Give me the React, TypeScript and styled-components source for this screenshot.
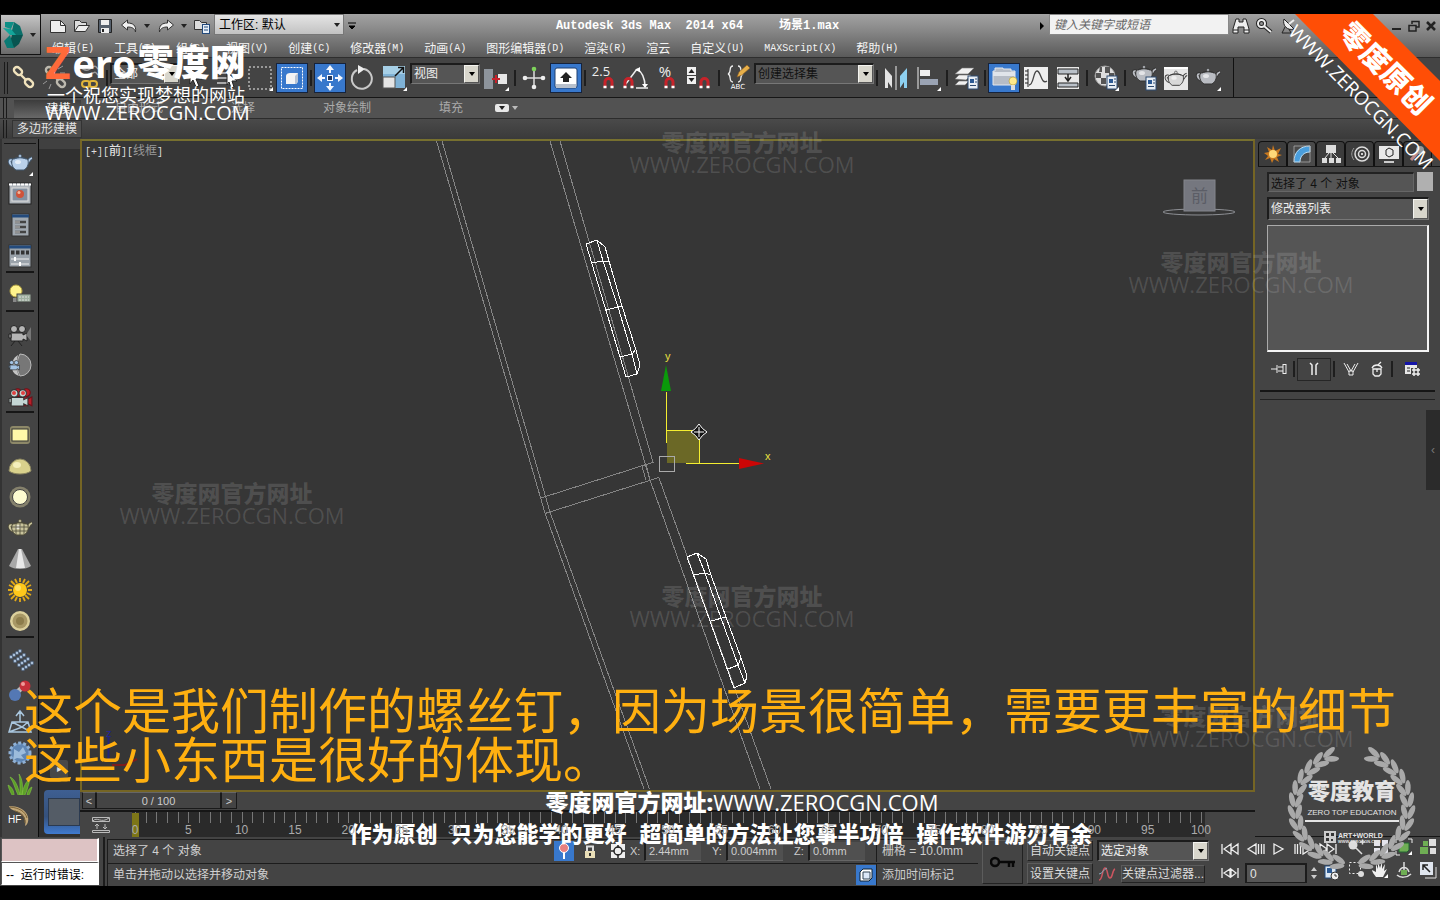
import React from "react";
import styled, { createGlobalStyle } from "styled-components";

const SANS = '"Liberation Sans", "Noto Sans CJK SC", sans-serif';
const MONO = '"Liberation Mono", "Noto Sans CJK SC", monospace';
const WIDE = '"Open Sans", "Noto Sans CJK SC", sans-serif';

const GlobalStyle = createGlobalStyle`
  * { box-sizing: border-box; }
  body { margin: 0; background: #000; font: 12px/16px ${SANS}; color: #e4e4e4; }
  button, input, select { font: inherit; color: inherit; margin: 0; padding: 0; border: 0; background: none; border-radius: 0; }
  svg { display: block; flex: none; }
`;

/* ---------- shell ---------- */

const Page = styled.div`
  position: relative;
  min-height: 100vh;
  padding: 14px 0;
  display: flex;
  flex-direction: column;
  background: #000;
  overflow: hidden;
`;

const Header = styled.header`
  display: flex;
  height: 44px;
  background: linear-gradient(#a2a2a2, #8a8a8a 35%, #5a5a5a);
  border-bottom: 1px solid #2e2e2e;
`;

const AppButton = styled.button`
  display: flex;
  align-items: center;
  justify-content: center;
  gap: 3px;
  width: 41px;
  height: 41px;
  border: 1px solid #111;
  background: linear-gradient(#c4c4c4, #6a6a6a);
`;

const HeaderRows = styled.div`
  flex: 1;
  display: flex;
  flex-direction: column;
`;

const TitleRow = styled.div`
  display: flex;
  align-items: center;
  height: 24px;
`;

const QuickTools = styled.div`
  display: flex;
  align-items: center;
  padding-left: 5px;
  width: 173px;
`;

const QuickButton = styled.button<{ $w?: number }>`
  display: flex;
  justify-content: center;
  width: ${(p) => p.$w ?? 24}px;
`;

const WorkspaceBox = styled.label`
  position: relative;
  display: flex;
  align-items: center;
  width: 130px;
  height: 21px;
  margin-bottom: 2px;
  background: linear-gradient(#e4e4e4, #c2c2c2);
  border: 1px solid #777;
  select { appearance: none; width: 100%; padding-left: 4px; color: #000; outline: 0; }
`;

const Caret = styled.span<{ $color?: string }>`
  width: 0;
  height: 0;
  margin: 0 3px;
  border: 3px solid transparent;
  border-top: 4px solid ${(p) => p.$color ?? "#222"};
  border-bottom: 0;
  pointer-events: none;
`;

const Title = styled.h1`
  flex: 1;
  margin: 0;
  padding-right: 4px;
  text-align: center;
  font: bold 12px/16px ${MONO};
  color: #fff;
  white-space: pre;
`;

const SearchInput = styled.input`
  width: 180px;
  height: 21px;
  margin: 0 0 2px 4px;
  padding-left: 4px;
  background: #f2f2f2;
  border: 1px solid #888;
  font-style: italic;
  color: #333;
  &::placeholder { color: #666; }
`;

const WindowButtons = styled.div`
  display: flex;
  margin-left: 87px;
  padding-right: 1px;
`;

const MenuRow = styled.nav`
  display: flex;
  align-items: center;
  gap: 20px;
  padding: 3px 0 0 11px;
  height: 20px;
`;

const MenuButton = styled.button`
  display: flex;
  align-items: center;
  color: #f4f4f4;
  white-space: nowrap;
`;

const Hotkey = styled.span`
  font: 10px/16px ${MONO};
`;

/* ---------- tool bar ---------- */

const ToolbarRow = styled.div`
  display: flex;
  height: 40px;
  background: #444;
  border-bottom: 1px solid #161616;
`;

const Toolbar = styled.div`
  display: flex;
  align-items: center;
  padding: 0 9px 0 4px;
  border-right: 1px solid #111;
`;

const Grip = styled.span<{ $h: number }>`
  width: 4px;
  height: ${(p) => p.$h}px;
  border: solid #1a1a1a;
  border-width: 0 1px;
`;

const ToolButton = styled.button<{ $on?: boolean }>`
  display: flex;
  align-items: center;
  justify-content: center;
  width: 32px;
  height: 30px;
  border: 1px solid ${(p) => (p.$on ? "#16233c" : "transparent")};
  background: ${(p) => (p.$on ? "#3878cc" : "none")};
`;

const ToolSeparator = styled.span`
  width: 2px;
  height: 16px;
  margin: 0 2px;
  background: #1e1e1e;
`;

const SelectBox = styled.label<{ $w?: number; $dark?: boolean; $h?: number; $raise?: boolean }>`
  display: flex;
  align-items: center;
  width: ${(p) => (p.$w ? p.$w + "px" : "auto")};
  height: ${(p) => p.$h ?? 21}px;
  margin-bottom: ${(p) => (p.$raise ? 9 : 0)}px;
  background: #555;
  border: 2px solid #1c1c1c;
  border-right: 1px solid #777;
  border-bottom: 1px solid #777;
  select {
    appearance: none;
    flex: 1;
    min-width: 0;
    padding-left: 2px;
    color: ${(p) => (p.$dark ? "#111" : "#eee")};
    outline: 0;
  }
`;

const ArrowBox = styled.span`
  display: flex;
  align-items: center;
  justify-content: center;
  width: 15px;
  align-self: stretch;
  background: #d8d6cc;
  border: 1px solid #f4f4f0;
  border-right-color: #555;
  border-bottom-color: #555;
  pointer-events: none;
`;

/* ---------- ribbon ---------- */

const RibbonTabs = styled.div`
  display: flex;
  align-items: center;
  height: 21px;
  padding-left: 3px;
  background: #525252;
  border-bottom: 1px solid #2c2c2c;
`;

const RibbonTab = styled.button<{ $on?: boolean }>`
  width: ${(p) => (p.$on ? 67 : 104)}px;
  height: 18px;
  margin: ${(p) => (p.$on ? "2px 6px 0 7px" : "0")};
  padding-left: ${(p) => (p.$on ? 22 : 0)}px;
  color: ${(p) => (p.$on ? "#eee" : "#aaa")};
  background: ${(p) => (p.$on ? "linear-gradient(#3c3c3c, #686868)" : "none")};
`;

const RibbonChip = styled.button`
  display: flex;
  align-items: center;
  justify-content: center;
  width: 14px;
  height: 8px;
  margin-left: -8px;
  border-radius: 2px;
  background: #e8e8e8;
`;

const RibbonBody = styled.div`
  display: flex;
  align-items: center;
  height: 20px;
  padding-left: 3px;
  background: linear-gradient(#4a4a4a, #3a3a3a);
`;

const RibbonPanelButton = styled.button`
  width: 70px;
  height: 18px;
  margin-left: 5px;
  border: 1px solid #333;
  background: #4e4e4e;
`;

/* ---------- work area ---------- */

const Work = styled.main`
  flex: 1;
  display: flex;
  background: #444;
`;

const SideBar = styled.div`
  display: flex;
  flex-direction: column;
  align-items: center;
  width: 39px;
  padding: 4px 0 6px;
  border-right: 1px solid #0c0c0c;
  border-left: 2px solid #333;
`;

const SideButton = styled.button`
  display: flex;
  align-items: center;
  justify-content: center;
  width: 32px;
  height: 31px;
`;

const SideSeparator = styled.span<{ $first?: boolean }>`
  width: ${(p) => (p.$first ? 32 : 28)}px;
  height: ${(p) => (p.$first ? 1 : 2)}px;
  margin: 0 0 ${(p) => (p.$first ? 3 : 6)}px;
  background: #161616;
`;

const Dock = styled.div`
  display: flex;
  flex-direction: column;
  justify-content: flex-end;
  gap: 12px;
  width: 41px;
  padding-bottom: 3px;
  background: #303030;
  border-top: 10px solid #404040;
`;

const DockPlay = styled.button`
  width: 18px;
  height: 18px;
  margin-left: 11px;
  border-radius: 2px;
  background: #484848;
  color: #ddd;
  font-size: 10px;
`;

const DockTile = styled.button`
  height: 44px;
  margin-left: 5px;
  padding: 8px 0 8px 4px;
  border-radius: 4px 0 0 4px;
  background: linear-gradient(#3e5f92, #35517c 60%, #3f7ad0);
  span { display: block; height: 28px; background: #545c66; border: 1px solid #2b3a50; }
`;

const Center = styled.div`
  flex: 1;
  min-width: 0;
  display: flex;
  flex-direction: column;
`;

const Viewport = styled.section`
  position: relative;
  flex: 1;
  border: 2px solid #756524;
  border-top-color: #77702f;
  background: #363636;
  overflow: hidden;
  > svg { position: absolute; left: 0; top: 0; }
`;

const ViewLabel = styled.div`
  padding: 3px;
  font: 12px/16px ${MONO};
  color: #ddd;
  i { font-style: normal; color: #999; }
  b { color: #ddd; font-weight: 500; }
  span { font-size: 10px; }
`;

const SliderRow = styled.div`
  display: flex;
  height: 18px;
  padding-left: 2px;
  font-size: 11px;
`;

const SliderButton = styled.button<{ $w: number }>`
  width: ${(p) => p.$w}px;
  height: 17px;
  color: #ccc;
  border: 1px solid #1a1a1a;
  border-top-color: #666;
`;

const RulerRow = styled.div`
  display: flex;
  height: 27px;
  border-top: 2px solid #161616;
`;

const RulerIcon = styled.button`
  width: 52px;
  padding-left: 12px;
`;

const Track = styled.div`
  position: relative;
  flex: 1;
  display: flex;
  padding: 0 4px 0 3px;
  margin-right: 50px;
  background: #2a2a2a;
`;

const TrackStep = styled.div`
  flex: 1;
  display: grid;
  grid-template-columns: repeat(5, 1fr);
  grid-template-rows: 11px 14px;
`;

const Tick = styled.i`
  border-left: 1px solid #777;
`;

const TickLabel = styled.span`
  position: relative;
  z-index: 1;
  grid-column: 1 / -1;
  justify-self: start;
  width: 30px;
  margin-left: -15px;
  text-align: center;
  font-size: 12px;
  line-height: 14px;
  color: #aaa;
`;

const TrackEnd = styled.div`
  width: 0;
  display: grid;
  grid-template-rows: 11px 14px;
`;

const FrameMarker = styled.span`
  position: absolute;
  left: 0;
  top: 1px;
  width: 7px;
  height: 24px;
  background: #7d7618;
`;

/* ---------- command panel ---------- */

const Command = styled.aside`
  display: flex;
  flex-direction: column;
  width: 185px;
  padding: 2px 0 0 3px;
  border-bottom: 1px solid #161616;
`;

const PanelTabs = styled.div`
  display: flex;
  border-bottom: 1px solid #161616;
`;

const PanelTab = styled.button<{ $on?: boolean }>`
  display: flex;
  align-items: center;
  justify-content: center;
  width: 29px;
  height: 25px;
  border: 1px solid #111;
  border-bottom: 0;
  border-radius: 4px 4px 0 0;
  background: ${(p) => (p.$on ? "#4a4a4a" : "#3c3c3c")};
`;

const PanelBody = styled.div`
  display: flex;
  flex-direction: column;
  gap: 5px;
  padding: 5px 11px 0 9px;
`;

const NameRow = styled.div`
  display: flex;
  gap: 3px;
  margin-right: -4px;
`;

const NameInput = styled.input`
  flex: 1;
  min-width: 0;
  height: 20px;
  padding-left: 2px;
  color: #111;
  background: #555;
  border: 2px solid #222;
  border-right: 1px solid #666;
  border-bottom: 1px solid #666;
`;

const Swatch = styled.button`
  width: 16px;
  height: 19px;
  background: #b0b0b0;
`;

const StackList = styled.div`
  height: 127px;
  background: #555;
  border: 1px solid #aaa;
  border-right: 2px solid #f4f4f4;
  border-bottom: 2px solid #f4f4f4;
`;

const StackTools = styled.div`
  display: flex;
  align-items: center;
  height: 24px;
`;

const StackButton = styled.button<{ $w?: number; $on?: boolean }>`
  display: flex;
  align-items: center;
  justify-content: center;
  width: ${(p) => p.$w ?? 24}px;
  height: 23px;
  border: 1px solid ${(p) => (p.$on ? "#262626" : "transparent")};
`;

const Rollout = styled.div`
  height: 10px;
  margin: 9px 5px 0 2px;
  border-top: 2px solid #161616;
  border-bottom: 1px solid #222;
`;

const PanelHandle = styled.button`
  align-self: flex-end;
  width: 14px;
  height: 80px;
  margin-top: 10px;
  background: #2b2b2b;
  color: #777;
`;

/* ---------- status bar ---------- */

const Status = styled.footer`
  display: flex;
  height: 49px;
  background: #444;
`;

const Listener = styled.div`
  display: flex;
  flex-direction: column;
  width: 105px;
  padding: 1px 5px 1px 1px;
  border-right: 2px solid #1c1c1c;
`;

const ListenerLine = styled.input<{ $pink?: boolean }>`
  width: 98px;
  height: 24px;
  padding-left: 4px;
  color: #000;
  background: ${(p) => (p.$pink ? "#ddc3c4" : "#fff")};
  border: 1px solid #555;
  border-right: 2px solid #fff;
  border-bottom: 1px solid #fff;
`;

const StatusLines = styled.div`
  flex: 1;
  min-width: 0;
  display: flex;
  flex-direction: column;
  margin-left: 2px;
  padding-top: 2px;
`;

const StatusLine = styled.div`
  display: flex;
  align-items: center;
  height: 24px;
  border-top: 1px solid #1c1c1c;
  border-left: 1px solid #1c1c1c;
`;

const StatusText = styled.span`
  flex: 1;
  padding-left: 5px;
  color: #d0d0d0;
`;

const StatusButton = styled.button<{ $on?: boolean; $w?: number }>`
  display: flex;
  align-items: center;
  justify-content: center;
  width: ${(p) => p.$w ?? 20}px;
  height: 20px;
  background: ${(p) => (p.$on ? "#3878cc" : "none")};
`;

const Coord = styled.label`
  display: flex;
  align-items: center;
  width: 82px;
  font-size: 11px;
  color: #ccc;
  span { width: 14px; }
  input {
    width: 57px;
    height: 19px;
    padding-left: 3px;
    background: #505050;
    border-left: 2px solid #1c1c1c;
    border-bottom: 1px solid #666;
  }
`;

const StatusCell = styled.span`
  width: 102px;
  height: 22px;
  padding: 3px 0 0 5px;
  line-height: 16px;
  color: #ccc;
  border-left: 1px solid #1c1c1c;
`;

const KeyArea = styled.div`
  display: grid;
  grid-template-columns: 41px 66px 112px;
  grid-template-rows: 21px 21px;
  gap: 2px 4px;
  margin-left: 4px;
  padding: 3px 0 0;
  align-content: start;
`;

const KeyButton = styled.button<{ $tall?: boolean }>`
  display: flex;
  align-items: center;
  justify-content: center;
  grid-row: ${(p) => (p.$tall ? "span 2" : "auto")};
  color: #ddd;
  white-space: nowrap;
  border: 1px solid #222;
  border-top-color: #5c5c5c;
  border-left-color: #5c5c5c;
`;

const FilterRow = styled.div`
  display: flex;
  align-items: center;
  gap: 4px;
`;

const Playback = styled.div`
  display: flex;
  flex-direction: column;
  width: 127px;
  margin-left: 8px;
`;

const PlaybackRow = styled.div`
  display: flex;
  align-items: center;
  height: 24px;
`;

const FrameInput = styled.input`
  width: 62px;
  height: 20px;
  margin-left: 2px;
  padding-left: 3px;
  background: #555;
  border: 2px solid #1c1c1c;
  border-bottom-width: 1px;
  font-size: 12px;
`;

const NavGrid = styled.div`
  display: grid;
  grid-template-columns: repeat(4, 24px);
  grid-auto-rows: 23px;
  width: 96px;
`;

/* ---------- overlays ---------- */

const Mark = styled.div<{ $x: string; $y: number }>`
  position: absolute;
  left: ${(p) => p.$x};
  top: ${(p) => p.$y}px;
  width: 240px;
  margin-left: -120px;
  text-align: center;
  font: 22px/22px ${WIDE};
  color: rgba(255, 255, 255, 0.13);
  pointer-events: none;
  b { display: block; font-weight: 900; font-size: 23px; }
`;

const Brand = styled.div`
  position: absolute;
  left: 45px;
  top: 42px;
  color: #fff;
  white-space: nowrap;
  pointer-events: none;
`;

const BrandName = styled.div`
  display: flex;
  gap: 2px;
  height: 43px;
  font: 900 36px/42px ${WIDE};
  em { font: bold 44px/40px ${WIDE}; color: #ff6a3a; }
  span { font: bold 38px/42px ${WIDE}; }
`;

const BrandMotto = styled.div`
  padding-left: 2px;
  font: 18px/18px "Noto Sans CJK SC", sans-serif;
`;

const BrandUrl = styled.div`
  font: 20px/20px ${WIDE};
`;

const Subtitle = styled.p`
  position: absolute;
  left: 24px;
  bottom: 119px;
  margin: 0;
  font: 49px/49px "Noto Sans CJK SC", sans-serif;
  color: #ffb010;
  white-space: nowrap;
`;

const Promo = styled.div`
  position: absolute;
  left: 0;
  right: 0;
  bottom: 51px;
  display: flex;
  flex-direction: column;
  align-items: center;
  color: #fff;
  font: 22px/31px ${WIDE};
  pointer-events: none;
`;

const PromoSite = styled.div`
  padding-left: 44px;
  b { font-weight: 900; font-size: 23px; }
`;

const PromoLine = styled.div`
  display: flex;
  gap: 13px;
  padding-left: 2px;
  b { font-weight: 900; }
`;

const Corner = styled.div`
  position: absolute;
  right: 0;
  top: 14px;
  svg { overflow: visible; }
`;

const Seal = styled.div`
  position: absolute;
  right: 20px;
  bottom: 28px;
`;

/* ---------- icons ---------- */

type IcoProps = { s?: number; w?: number; h?: number; vb?: string; children: React.ReactNode };
const Ico = ({ s = 28, w, h, vb, children }: IcoProps) => (
  <svg width={w ?? s} height={h ?? s} viewBox={vb ?? `0 0 ${w ?? s} ${h ?? s}`} fill="none" aria-hidden="true">
    {children}
  </svg>
);

const Fly = () => <path d="M27 23v4h-4z" fill="#fff" />;

const Magnet = ({ x = 13, y = 14 }: { x?: number; y?: number }) => (
  <g transform={`translate(${x} ${y})`}>
    <path d="M2 11V5a3 3 0 0 1 7 0v6" stroke="#c8232a" strokeWidth="3" />
    <path d="M0.500 10h3M7.500 10h3" stroke="#fff" strokeWidth="2.500" />
  </g>
);

const Teapot = ({ fill = "#b9bcc2", line = "#333" }: { fill?: string; line?: string }) => (
  <g>
    <path d="M7 12C3 9 2 14 7 17M20 15c3-1 2-5 6-6" stroke={line} strokeWidth="3.600" />
    <path d="M7 12C3 9 2 14 7 17M20 15c3-1 2-5 6-6" stroke={fill} strokeWidth="1.800" />
    <path d="M6 11c3-3 13-3 16 0 1 5-1 8-4 10h-8c-3-2-5-5-4-10z" fill={fill} stroke={line} />
    <path d="M8 10c3-2 9-2 12 0M14 6v2" stroke={line} />
    <circle cx="14" cy="7" r="1.500" fill={fill} stroke={line} strokeWidth="0.600" />
    <ellipse cx="12" cy="13" rx="3" ry="2" fill="#fff" opacity="0.600" />
  </g>
);

const Chip = ({ x = 16, y = 13 }: { x?: number; y?: number }) => (
  <g transform={`translate(${x} ${y})`}>
    <rect width="10" height="13" fill="#e8eef4" stroke="#2c4a70" />
    <path d="M2 3h4v4H2z" fill="#2c5a94" />
    <path d="M7 3h2M7 6h2M2 9.500h6" stroke="#2c4a70" />
  </g>
);

const Chain = ({ c = "#f1e3bd" }: { c?: string }) => (
  <g strokeWidth="2.400" stroke={c}>
    <rect x="-4.500" y="-3" width="9" height="6" rx="3" transform="translate(8 7) rotate(45)" />
    <rect x="-4.500" y="-3" width="9" height="6" rx="3" transform="translate(19 19) rotate(45)" />
    <path d="m10 10 6 6" />
  </g>
);

const Cam = ({ c = "#b5b5b5", d = "#222" }: { c?: string; d?: string }) => (
  <g fill={c} stroke={d}>
    <circle cx="6" cy="6" r="3.500" />
    <circle cx="14" cy="6" r="3.500" />
    <path d="M3 10h12v2l4-2v8l-4-2v2H3z" />
    <path d="M1 11h2v4H1z" />
  </g>
);

const toolIcons: Record<string, React.ReactNode> = {
  link: <Ico><Chain /></Ico>,
  unlink: <Ico><Chain c="#bdb9ae" /><path d="m16 5 5-3M18 9h5M5 17l-4 3M9 20l-2 5" stroke="#999" /></Ico>,
  bind: <Ico><path d="M2 5c6-5 8 5 14 0s6-2 8 0M2 11c6-5 8 5 14 0s6-2 8 0" stroke="#999" strokeWidth="1.500" /><rect x="8" y="17" width="8" height="6" rx="3" stroke="#e0b43a" strokeWidth="2" /><rect x="15" y="17" width="8" height="6" rx="3" stroke="#e0b43a" strokeWidth="2" /></Ico>,
  cursor: <Ico><path d="m8 4 12 11h-6l3 7-3 1-3-7-3 4z" fill="#fff" stroke="#222" /></Ico>,
  byname: <Ico><path d="M3 4h14M3 9h14M3 14h14M3 19h14" stroke="#aaa" strokeWidth="2" /><path d="m13 8 10 9h-5l2 6-3 1-2-6-2 3z" fill="#fff" stroke="#222" /></Ico>,
  rect: <Ico><rect x="3" y="3" width="22" height="22" stroke="#eee" strokeDasharray="2 2" /><Fly /></Ico>,
  window: <Ico><rect x="3.500" y="3.500" width="21" height="21" stroke="#fff" strokeDasharray="2 1" /><path d="M8 12c0-2 2-3 4-3h8v7c0 2-1 4-3 4H8z" fill="#f4f4f4" /><path d="M17 20c2 0 3-2 3-4V9l-3 3z" fill="#b8c4d4" /></Ico>,
  move: <Ico><path d="M14 1l4 5h-3v3h-2V6h-3zM14 27l4-5h-3v-3h-2v3h-3zM1 14l5-4v3h3v2H6v3zM27 14l-5-4v3h-3v2h3v3z" fill="#f4f8ff" /><rect x="11.500" y="11.500" width="5" height="5" fill="#203860" stroke="#f4f8ff" /></Ico>,
  rotate: <Ico><path d="M16 5a10 10 0 1 1-7 1" stroke="#c9c9c9" strokeWidth="2" /><path d="m10 1 7 4-7 5z" fill="#eee" /></Ico>,
  scale: <Ico><path d="M3 2h22v22H3z" fill="#7fb2d6" /><path d="M3 2h22v8H3z" fill="#a6cfe6" /><rect x="3" y="13" width="12" height="11" fill="#e4e4e4" stroke="#555" /><path d="M15 12 23 4M18 3.500h5.500V9" stroke="#111" strokeWidth="1.500" /><Fly /></Ico>,
  pivot: <Ico><rect x="2" y="5" width="9" height="20" fill="#8d949c" /><rect x="16" y="10" width="9" height="10" fill="#e8e8e8" /><path d="M14 11v8M10 15h8" stroke="#c8202a" strokeWidth="2" /><Fly /></Ico>,
  manip: <Ico><path d="M14 7v14M7 14h14" stroke="#ddd" strokeWidth="1.500" /><circle cx="14" cy="5" r="2.300" fill="#7ed35b" /><circle cx="14" cy="23" r="2.300" fill="#eee" /><circle cx="5" cy="14" r="2.300" fill="#eee" /><circle cx="23" cy="14" r="2.300" fill="#eee" /></Ico>,
  keyb: <Ico><rect x="3" y="4" width="22" height="20" rx="2" fill="#fff" stroke="#204070" /><path d="M4 20h20v4H4z" fill="#b8c0cc" /><path d="m14 8 6 6h-3v4h-6v-4H8z" fill="#222" /></Ico>,
  angle: <Ico><path d="M3 21 15 5M14 24h12M15 5c5 3 8 9 8 18" stroke="#eee" strokeWidth="1.500" /><path d="m13 6 5-3v5zM20 20h6l-3 4z" fill="#fff" /><Magnet x={1} y={13} /></Ico>,
  spin: <Ico><rect x="1" y="3" width="9" height="8" fill="#f0f0f0" /><rect x="1" y="12" width="9" height="8" fill="#f0f0f0" /><path d="m5.500 5 3 4h-6zM5.500 18l3-4h-6z" fill="#222" /><Magnet x={13} y={13} /></Ico>,
  mirror: <Ico><path d="M3 4l7 8v12l-4-6v6H3z" fill="#e4e4e4" /><path d="M14 2v24" stroke="#eee" /><path d="M25 4l-7 8v12l4-6v6h3z" fill="#8dd0f0" /></Ico>,
  align: <Ico><path d="M4 3v22" stroke="#eee" /><rect x="6" y="6" width="10" height="6" fill="#eee" /><rect x="6" y="15" width="18" height="6" fill="#9aa3b3" /><Fly /></Ico>,
  layers: <Ico><path d="m3 10 7-6h12l-6 6zM3 15l4-4h12l-5 5zM3 21l4-4h10l-4 4z" fill="#f0f0f0" stroke="#777" strokeWidth="0.600" /><Chip x={16} y={12} /></Ico>,
  ribbon: <Ico><path d="M3 7h2V4h8v1h8v2h4v14H3z" fill="#b6bcc6" stroke="#e4e8ee" /><path d="M3 8h22v4H3z" fill="#e0e4ea" /><circle cx="23" cy="17" r="4" fill="#ffe98a" stroke="#a58a20" strokeWidth="0.500" /><path d="M21 21h4v5h-4z" fill="#ddd" /></Ico>,
  curve: <Ico><rect x="2" y="3" width="24" height="22" fill="#eee" /><path d="M6 5v18M3 7h3M3 11h3M3 15h3M3 19h3" stroke="#222" /><path d="M7 21c5 0 4-14 8-14s4 14 10 10" stroke="#444" strokeWidth="1.300" /></Ico>,
  schema: <Ico><rect x="3" y="3" width="22" height="22" fill="#e8e8e8" /><path d="M4 5h20v5H4zM4 19h20v4H4z" fill="#b9c0c8" stroke="#222" /><path d="M14 10v6M11 13l3 4 3-4" stroke="#222" strokeWidth="1.500" /></Ico>,
  material: <Ico><circle cx="13" cy="12" r="10" fill="#ddd" stroke="#999" /><path d="M4 9h5v5H4zM13 3h5v6h-5zM9 14h5v6H9zM17 9h5v5h-5zM8 3h2v5H7z" fill="#555" /><Chip x={15} y={12} /><Fly /></Ico>,
  setup: <Ico><g transform="translate(0 -4)"><Teapot /></g><Chip x={16} y={13} /></Ico>,
  frame: <Ico><rect x="2" y="3" width="24" height="23" fill="#e6e6e6" /><path d="M2 4h24" stroke="#fff" strokeWidth="2" /><g transform="translate(1 2) scale(.92)"><Teapot fill="#d8d8d8" /></g></Ico>,
  render: <Ico><g transform="translate(0 -1)"><Teapot /></g><Fly /></Ico>,
};

const SmallText = styled.span<{ $s: number }>`
  font: ${(p) => p.$s}px/14px "Open Sans", sans-serif;
  color: #eee;
`;
const TextTool = styled.span`
  display: flex;
  align-items: flex-start;
  height: 28px;
`;
const Overlap = styled.span`
  display: flex;
  margin: 12px 0 0 -8px;
`;

const SnapIcon = ({ t, s }: { t: string; s: number }) => (
  <TextTool>
    <SmallText $s={s}>{t}</SmallText>
    <Overlap><Ico s={14}><Magnet x={1} y={1} /></Ico></Overlap>
  </TextTool>
);

const NamedStack = styled.span`
  display: flex;
  flex-direction: column;
  align-items: center;
  small { font: 7px/8px "DejaVu Sans", sans-serif; color: #fff; }
`;

const sideIcons: React.ReactNode[][] = [
  [
    <Ico><Teapot fill="#b9d0ea" line="#41566c" /><Fly /></Ico>,
    <Ico><rect x="3" y="3" width="22" height="21" fill="#aeb4ba" stroke="#222" /><path d="M3 4.500h22" stroke="#fff" strokeWidth="2" strokeDasharray="3 1" /><rect x="6" y="8" width="16" height="13" fill="#8390a0" stroke="#e0e0e0" /><circle cx="14" cy="14" r="4" fill="#d0533a" /><circle cx="13" cy="12.500" r="1.500" fill="#f3b79c" /></Ico>,
    <Ico><rect x="6" y="3" width="17" height="22" fill="#a0a8b0" stroke="#333" /><path d="M6 5h17" stroke="#234a7c" strokeWidth="3" /><path d="M9 11h11M9 16h11M9 21h11" stroke="#444" strokeWidth="2.500" /><path d="M9 11h5M9 16h5M9 21h5" stroke="#ddd" /></Ico>,
    <Ico><rect x="3" y="3" width="22" height="22" fill="#9aa2aa" stroke="#333" /><path d="M3 5h22" stroke="#234a7c" strokeWidth="3" /><path d="M5 10.500h18" stroke="#333" strokeWidth="4" strokeDasharray="3.500 1.500" /><path d="M5 17h18M5 22h18" stroke="#eee" /><path d="M9 15v4M14 20v4" stroke="#fff" strokeWidth="2" /></Ico>,
  ],
  [
    <Ico><circle cx="10" cy="10" r="6" fill="#fff38c" stroke="#b3a244" /><path d="M7 17h6v4H7z" fill="#888" /><rect x="11" y="13" width="14" height="8" fill="#9fb0a0" stroke="#444" /><path d="M13 16h10M13 19h10" stroke="#ddd" strokeDasharray="2 1" /></Ico>,
  ],
  [
    <Ico><g transform="translate(2 3)"><Cam /></g><path d="M25 7v14l-5-6z" fill="#777" /><path d="m9 21-4 5M12 21l4 5" stroke="#222" /></Ico>,
    <Ico><path d="M14 3a11 11 0 0 1 0 22c-4-7-4-15 0-22z" fill="#777" stroke="#bbb" /><path d="M12 4c-5 3-7 8-6 14 1 4 4 6 7 7-3-7-3-14-1-21z" fill="#c4c4c4" /><g transform="translate(2 8) scale(.6)"><Cam c="#a4c4e4" /></g></Ico>,
    <Ico><g transform="translate(5 4) scale(1.100)"><Cam c="#b81e28" d="#701018" /></g><g transform="translate(2 5) scale(1.050)"><Cam c="#c4d6d4" d="#333" /></g><circle cx="8" cy="11" r="2" fill="#e04040" /><circle cx="17" cy="11" r="2" fill="#e04040" /></Ico>,
  ],
  [
    <Ico><rect x="4" y="5" width="20" height="18" rx="3" fill="#8d8868" /><rect x="6" y="8" width="16" height="12" fill="#fff9a8" stroke="#333" /></Ico>,
    <Ico><path d="M3 19a11 12 0 0 1 22 0c-5 4-17 4-22 0z" fill="#d9d18c" stroke="#8a8560" /><ellipse cx="11" cy="13" rx="4" ry="3" fill="#f5f0bc" /></Ico>,
    <Ico><circle cx="14" cy="14" r="10.500" fill="#85816c" /><circle cx="14" cy="14" r="7.500" fill="#fdfbd0" stroke="#444" /></Ico>,
    <Ico><Teapot fill="#c9c49c" line="#4d4a38" /><path d="M10 9v12M14 8v13M18 9v12M6 13h16M7 17h14" stroke="#4d4a38" strokeWidth="0.800" /></Ico>,
    <Ico><path d="M12 4h4l9 17c-5 4-17 4-22 0z" fill="#a8a8a8" /><path d="M13 4h2l4 19h-9z" fill="#e8e8e8" /></Ico>,
    <Ico><path d="M14 2v4M14 22v4M2 14h4M22 14h4M5 5l4 4M19 19l4 4M23 5l-4 4M9 19l-4 4M9 3l2 4M17 21l2 4M19 3l-2 4M11 21l-2 4M3 9l4 2M21 17l4 2M3 19l4-2M21 11l4-2" stroke="#e0a818" strokeWidth="1.800" /><circle cx="14" cy="14" r="7" fill="#ffc81a" /><circle cx="12" cy="12" r="3" fill="#ffe060" /></Ico>,
    <Ico><circle cx="14" cy="14" r="10" fill="#dcd09c" /><circle cx="14" cy="14" r="7.500" fill="#a89866" /><circle cx="14" cy="14" r="4" fill="#8d7d4c" /></Ico>,
  ],
  [
    <Ico>{[0, 1, 2, 3].map((r) => [0, 1, 2, 3].map((c) => <circle key={`${r}${c}`} cx={5 + c * 4 + r * 3} cy={11 - r * 2 + c * 4} r="1.900" fill="#a9bfd8" stroke="#38485c" strokeWidth="0.800" />))}</Ico>,
    <Ico><path d="M9 17 18 9" stroke="#bbb" strokeWidth="5" /><circle cx="9" cy="18" r="6" fill="#5478b4" /><circle cx="19" cy="9" r="5.500" fill="#c4303a" /><circle cx="17" cy="7" r="2" fill="#f09a9a" /></Ico>,
    <Ico><path d="M6 14h16l3 10H3zM6 14l10 5 6-5M3 24l13-5 9 5M14 14V4M10 8l4-5 4 5" stroke="#a9c6de" strokeWidth="1.500" /></Ico>,
    <Ico><circle cx="14" cy="14" r="10" fill="#5f86b4" stroke="#8fb0d4" strokeWidth="3" strokeDasharray="3 2" /><path d="m8 10 5 3 4-5 3 6-5 2 3 4-7-1-4 2 1-6z" fill="#9cbcdc" /></Ico>,
    <Ico><path d="M14 25C12 16 9 9 4 7c4 6 5 12 8 18M14 25c0-10 0-15-1-21 4 6 4 14 3 21M16 25c1-8 4-14 9-17-3 6-3 11-6 17M8 25c0-4-2-8-6-10 1 5 3 8 4 10M21 25c0-3 2-7 5-8-1 4-2 6-3 8" fill="#5da028" stroke="#8cd04a" strokeWidth="0.500" /></Ico>,
    <Ico><path d="M3 5c8 0 17 3 19 11 1 5-1 8-3 9 2-8-2-13-9-15C6 9 4 8 3 5z" fill="#c2a778" /><path d="M4 6c9 1 15 4 17 11M9 10c7 2 10 6 10 12" stroke="#7b6238" /><text x="2" y="22" fontFamily="Liberation Sans" fontSize="10" fill="#fff">HF</text></Ico>,
  ],
];

const ViewportDrawing = () => (
  <svg width="1171" height="648" fill="none" aria-hidden="true">
    <g transform="translate(-82 -141)">
      <g stroke="#858585" strokeWidth="1" shapeRendering="crispEdges">
        <path d="M436.500 141 545 513 644 789M442 141l104 357 4 14 99.500 277" />
        <path d="M550 141l100 339 110 309M560 141l93 321M659 478l112 311" />
        <path d="M541 498l113-36M545 513.500l114-36M642 466l4 14M646 464l4 16" />
      </g>
      <g stroke="#fff" strokeWidth="1" shapeRendering="crispEdges">
        <path d="M586 244l11-4 8 7 4 14 13 45 14 44 4 15-3 9-11 3zM597 240l6 21 15 46 14 47 5 20M592 263l11-2 6 1M606 310l16-4M620 357l12-3 4-5" />
        <path d="M687 557l10-4 9 6 5 16 15 42 15 41 6 18-2 7-11 5zM697 553l8 20 16 45 17 47 7 18M694 575l11-2 6 2M711 621l15-4M728 669l10-4 3-7" />
      </g>
      <path d="M667 431h32v32h-32z" fill="#6b6826" />
      <path d="M666.500 392v51M667 430.500h32.500V463M686 463.500h53" stroke="#f4ee30" />
      <path d="M666 365l5 26h-10z" fill="#0a9a0a" />
      <path d="M739 458v11l25-5.500z" fill="#cc0606" />
      <rect x="659.500" y="456.500" width="15" height="15" stroke="#aaa" />
      <text x="665" y="360" fontFamily="Liberation Sans" fontSize="11" fill="#e8e040">y</text>
      <text x="765" y="460" fontFamily="Liberation Sans" fontSize="11" fill="#e8e040">x</text>
      <path d="M699 424l3.500 4.500 4.500 3.500-4.500 3.500-3.500 4.500-3.500-4.500-4.500-3.500 4.500-3.500z" fill="#111" stroke="#fff" />
      <path d="M699 427v10M694 432h10" stroke="#fff" />
      <path d="M108.500 737v24" stroke="#23237c" strokeWidth="2" />
      <path d="M112 765h13l12-6" stroke="#7c1c1c" strokeWidth="2" />
      <text x="106" y="737" fontFamily="Liberation Sans" fontSize="11" fill="#23239c">z</text>
      <ellipse cx="1199" cy="212" rx="36" ry="3" stroke="#8d8f94" />
      <rect x="1184" y="180" width="31" height="31" fill="#75777f" stroke="#83858c" />
      <text x="1191" y="202" fontFamily="Noto Sans CJK SC" fontSize="17" fill="#5b5d66">前</text>
    </g>
  </svg>
);

const CornerRibbon = () => (
  <svg width="150" height="165" viewBox="1290 14 150 165" aria-hidden="true">
    <path d="M1295 14h78l67 67v80z" fill="#ff4e06" />
    <text transform="translate(1386 68) rotate(45)" y="11" textAnchor="middle" fontFamily="Noto Sans CJK SC" fontWeight="900" fontSize="29" fill="#fff">零度原创</text>
    <text transform="translate(1361 97) rotate(45)" y="7" textAnchor="middle" fontFamily="Open Sans" fontSize="19" fill="#fff">WWW.ZEROCGN.COM</text>
  </svg>
);

const leaves = Array.from({ length: 13 }, (_, i) => 104 + i * 12);

const SealDrawing = () => (
  <svg width="136" height="128" viewBox="1284 744 136 128" aria-hidden="true">
    {[1, -1].map((side) => (
      <g key={side} transform={side === 1 ? undefined : "translate(2703 0) scale(-1 1)"} fill="#a9a9a9">
        {leaves.map((a) => {
          const r = (a * Math.PI) / 180;
          return [53, 60].map((rad, k) => (
            <ellipse
              key={`${a}-${k}`}
              rx="7.500"
              ry="2.800"
              transform={`translate(${1351.5 + rad * Math.cos(r)} ${808 + rad * Math.sin(r)}) rotate(${a + 90 + (k ? -20 : 20)})`}
            />
          ));
        })}
      </g>
    ))}
    <text x="1352" y="799" textAnchor="middle" fontFamily="Noto Sans CJK SC" fontWeight="900" fontSize="22" fill="#e4e4e4">零度教育</text>
    <text x="1352" y="815" textAnchor="middle" fontFamily="Liberation Sans" fontSize="8" fill="#e4e4e4">ZERO TOP EDUCATION</text>
    <path d="M1305 820h94v2h-94z" fill="#e4e4e4" />
    <path d="M1324 831h12v12h-12z" fill="#ccc" />
    <path d="M1326 833h3v3h-3zM1331 833h3v3h-3zM1326 838h3v3h-3zM1331 839h2v2h-2z" fill="#333" />
    <text x="1338" y="838" fontFamily="Liberation Sans" fontWeight="bold" fontSize="7" fill="#e4e4e4">ART+WORLD</text>
    <text x="1338" y="843" fontFamily="Liberation Sans" fontWeight="bold" fontSize="4" fill="#e4e4e4">WWW.ZEROCGN.COM</text>
  </svg>
);

/* ---------- data ---------- */

const menus: [string, string][] = [
  ["编辑", "(E)"], ["工具", "(T)"], ["组", "(G)"], ["视图", "(V)"], ["创建", "(C)"], ["修改器", "(M)"], ["动画", "(A)"],
  ["图形编辑器", "(D)"], ["渲染", "(R)"], ["渲云", ""], ["自定义", "(U)"], ["", "MAXScript(X)"], ["帮助", "(H)"],
];

const marks: [string, number][] = [
  ["calc(50% + 22px)", 131],
  ["calc(100% - 199px)", 251],
  ["232px", 482],
  ["calc(50% + 22px)", 585],
  ["calc(100% - 199px)", 705],
];

const Tool = ({ name, on }: { name: string; on?: boolean }) => (
  <ToolButton $on={on} aria-label={name}>{toolIcons[name]}</ToolButton>
);

const Picker = ({ label, value, ...rest }: { label: string; value: string; $w?: number; $dark?: boolean; $h?: number; $raise?: boolean }) => (
  <SelectBox {...rest}>
    <select aria-label={label}><option>{value}</option></select>
    <ArrowBox><Caret $color="#000" /></ArrowBox>
  </SelectBox>
);

const PlayButton = ({ label, d, w }: { label: string; d: string; w: number }) => (
  <StatusButton $w={w} aria-label={label}>
    <Ico w={20} h={16}><path d={d} fill="#444" stroke="#eee" strokeWidth="1.300" /></Ico>
  </StatusButton>
);

export default function App() {
  return (
    <Page>
      <GlobalStyle />
      <Header>
        <AppButton aria-label="应用程序">
          <Ico w={22} h={28}><path d="M3 1h9l-3 7-6-2z" fill="#0d8f86" /><path d="M12 1l6 4 3 9H9z" fill="#0b6f6a" /><path d="M1 7l8 1 5 6H8z" fill="#13a59a" /><path d="M21 14l-4 9-5 4-4-6 2-7z" fill="#085450" /><path d="M2 20l6-6 2 7 2 6H5z" fill="#0a7a74" /></Ico>
          <Caret $color="#222" />
        </AppButton>
        <HeaderRows>
          <TitleRow>
            <QuickTools>
              <QuickButton aria-label="新建"><Ico w={18} h={16}><path d="M1.500 2.500h10l5 5v7h-15z" fill="#eee" stroke="#333" /><path d="M11.500 2.500v5h5" stroke="#333" /></Ico></QuickButton>
              <QuickButton aria-label="打开"><Ico w={18} h={16}><path d="M1.500 13.500v-11h5l2 2h5v3" fill="#ddd" stroke="#333" /><path d="m1.500 13.500 4-6h11l-4 6z" fill="#eee" stroke="#333" /></Ico></QuickButton>
              <QuickButton aria-label="保存"><Ico w={16} h={16}><path d="M1.500 1.500h13v13h-13z" fill="#56606c" stroke="#222" /><path d="M4 2h8v5H4zM4 10h8v5H4z" fill="#eee" /><path d="M5 11h2v3H5z" fill="#222" /></Ico></QuickButton>
              <QuickButton aria-label="撤消"><Ico w={18} h={16}><path d="m1.500 7 6-5v3c5 0 9 2 8 9-1-4-4-5-8-5v3z" fill="#f0f0f0" stroke="#333" /></Ico></QuickButton>
              <Caret />
              <QuickButton $w={26} aria-label="重做"><Ico w={18} h={16}><path d="m16.500 7-6-5v3c-5 0-9 2-8 9 1-4 4-5 8-5v3z" fill="#f0f0f0" stroke="#333" /></Ico></QuickButton>
              <Caret />
              <QuickButton aria-label="项目"><Ico w={18} h={16}><path d="M1.500 11.500v-9h5l2 2h5v7z" fill="#ddd" stroke="#333" /><rect x="9.500" y="6.500" width="7" height="9" fill="#e8f0f8" stroke="#234a7c" /><path d="M11 9h4M11 12h4" stroke="#234a7c" /></Ico></QuickButton>
            </QuickTools>
            <WorkspaceBox>
              <select aria-label="工作区"><option>工作区: 默认</option></select>
              <Caret />
            </WorkspaceBox>
            <QuickButton $w={16} aria-label="自定义快速访问"><Ico w={8} h={8}><path d="M0 1h8M1 4h6L4 7z" fill="#000" stroke="#000" /></Ico></QuickButton>
            <Title>{"Autodesk 3ds Max  2014 x64     场景1.max"}</Title>
            <Ico w={6} h={8}><path d="M1 0v8l4-4z" fill="#000" /></Ico>
            <SearchInput aria-label="搜索" placeholder="键入关键字或短语" />
            <QuickButton aria-label="查找"><Ico w={18} h={16}><path d="M4 1h3v3h4V1h3l3 10v4h-5v-6H6v6H1v-4z" fill="#eee" stroke="#222" /><path d="M1 12h5M12 12h5" stroke="#222" /></Ico></QuickButton>
            <QuickButton aria-label="密钥"><Ico w={18} h={16}><path d="M8 8l7 6" stroke="#222" strokeWidth="4" /><circle cx="5.500" cy="5.500" r="3.500" stroke="#222" strokeWidth="4" /><path d="M8 8l7 6" stroke="#eee" strokeWidth="2" /><circle cx="5.500" cy="5.500" r="3.500" stroke="#eee" strokeWidth="2" /></Ico></QuickButton>
            <QuickButton aria-label="通讯"><Ico w={18} h={16}><path d="M4 1l10 10c-6 2-12-3-10-10z" fill="#eee" stroke="#222" /><path d="M5 9l-3 6h9l-2-4" stroke="#222" /><path d="M9 6l5-4" stroke="#eee" strokeWidth="2" /></Ico></QuickButton>
            <WindowButtons>
              <QuickButton $w={17} aria-label="最小化"><Ico w={12} h={12}><path d="M1 9h9" stroke="#222" strokeWidth="2" /></Ico></QuickButton>
              <QuickButton $w={17} aria-label="还原"><Ico w={12} h={12}><path d="M4 4V1.500h7V7H8M1 5.500h7V11H1z" stroke="#222" strokeWidth="1.500" /></Ico></QuickButton>
              <QuickButton $w={17} aria-label="关闭"><Ico w={12} h={12}><path d="m2 2 8 8M10 2l-8 8" stroke="#222" strokeWidth="2.500" /></Ico></QuickButton>
            </WindowButtons>
          </TitleRow>
          <MenuRow>
            {menus.map(([t, k]) => (
              <MenuButton key={t + k}>{t}<Hotkey>{k}</Hotkey></MenuButton>
            ))}
          </MenuRow>
        </HeaderRows>
      </Header>

      <ToolbarRow>
        <Toolbar>
          <Grip $h={32} />
          <Tool name="link" /><Tool name="unlink" /><Tool name="bind" />
          <ToolSeparator />
          <Picker label="选择过滤器" value="全部" $w={70} $raise />
          <Tool name="cursor" /><Tool name="byname" /><Tool name="rect" /><Tool name="window" on />
          <ToolSeparator />
          <Tool name="move" on /><Tool name="rotate" /><Tool name="scale" />
          <Picker label="参考坐标系" value="视图" $w={70} $raise />
          <Tool name="pivot" />
          <ToolSeparator />
          <Tool name="manip" /><Tool name="keyb" on />
          <ToolSeparator />
          <ToolButton aria-label="捕捉开关"><SnapIcon t="2.5" s={13} /></ToolButton>
          <Tool name="angle" />
          <ToolButton aria-label="百分比捕捉"><SnapIcon t="%" s={15} /></ToolButton>
          <Tool name="spin" />
          <ToolSeparator />
          <ToolButton aria-label="编辑命名选择集">
            <NamedStack>
              <Ico w={26} h={19}><path d="M8 2c-5 0-1 7-5 8 4 1 0 8 5 8M13 2c5 0 1 7 5 8-4 1 0 8-5 8" stroke="#eee" strokeWidth="1.300" /><path d="m12 13 2-5 8-7 3 3-8 7z" fill="#e8b04a" stroke="#8a5a20" strokeWidth="0.600" /></Ico>
              <small>ABC</small>
            </NamedStack>
          </ToolButton>
          <Picker label="命名选择集" value="创建选择集" $w={120} $dark $raise />
          <ToolSeparator />
          <Tool name="mirror" /><Tool name="align" />
          <ToolSeparator />
          <Tool name="layers" />
          <ToolSeparator />
          <Tool name="ribbon" on /><Tool name="curve" /><Tool name="schema" />
          <ToolSeparator />
          <Tool name="material" />
          <ToolSeparator />
          <Tool name="setup" /><Tool name="frame" /><Tool name="render" />
        </Toolbar>
      </ToolbarRow>

      <RibbonTabs>
        <Grip $h={20} />
        <RibbonTab $on>建模</RibbonTab>
        {["自由形式", "选择", "对象绘制", "填充"].map((t) => <RibbonTab key={t}>{t}</RibbonTab>)}
        <RibbonChip aria-label="显示选项"><Caret /></RibbonChip>
        <Caret $color="#bbb" />
      </RibbonTabs>
      <RibbonBody>
        <Grip $h={18} />
        <RibbonPanelButton>多边形建模</RibbonPanelButton>
      </RibbonBody>

      <Work>
        <SideBar>
          {sideIcons.map((group, g) => (
            <React.Fragment key={g}>
              <SideSeparator $first={g === 0} />
              {group.map((icon, i) => <SideButton key={i} aria-label={`工具 ${g + 1}-${i + 1}`}>{icon}</SideButton>)}
            </React.Fragment>
          ))}
        </SideBar>
        <Dock>
          <DockPlay aria-label="播放">▸</DockPlay>
          <DockTile aria-label="视口布局"><span /></DockTile>
        </Dock>
        <Center>
          <Viewport aria-label="前视图">
            <ViewLabel><span>[+][</span><b>前</b><span>][</span><i>线框</i><span>]</span></ViewLabel>
            <ViewportDrawing />
          </Viewport>
          <SliderRow>
            <SliderButton $w={14}>&lt;</SliderButton>
            <SliderButton $w={125}>0 / 100</SliderButton>
            <SliderButton $w={16}>&gt;</SliderButton>
          </SliderRow>
          <RulerRow>
            <RulerIcon aria-label="打开迷你曲线编辑器">
              <Ico w={18} h={18}><path d="M.5 1.500h17v4H.5zM.5 14.500h17v2H.5z" stroke="#bbb" /><path d="M1 5c4-5 8 3 16-3M5 13V8M3 10l2-2 2 2M13 8v5M11 11l2 2 2-2" stroke="#bbb" /></Ico>
            </RulerIcon>
            <Track>
              <FrameMarker />
              {Array.from({ length: 20 }, (_, i) => (
                <TrackStep key={i}>
                  <Tick /><Tick /><Tick /><Tick /><Tick />
                  <TickLabel>{i * 5}</TickLabel>
                </TrackStep>
              ))}
              <TrackEnd><Tick /><TickLabel>100</TickLabel></TrackEnd>
            </Track>
          </RulerRow>
        </Center>
        <Command>
          <PanelTabs>
            <PanelTab aria-label="创建"><Ico s={20}><path d="m10 1 2 6 6-3-3 6 4 1-5 2 2 5-5-3-2 4-2-5-5 2 3-4-4-3 5-1-2-5 5 3z" fill="#c87820" /><circle cx="10" cy="10" r="4" fill="#ffd878" /></Ico></PanelTab>
            <PanelTab $on aria-label="修改"><Ico s={20}><path d="M2 18C2 8 8 2 18 2v6c-6 0-10 4-10 10z" fill="#4a9edc" stroke="#bfe2fa" /><path d="M2 18V2h16v16H7" stroke="#aaa" strokeWidth="0.800" /></Ico></PanelTab>
            <PanelTab aria-label="层次"><Ico s={20}><path d="M5 1h10v8H5zM1 14h5v5H1zM8 14h5v5H8zM15 14h5v5h-5z" fill="#ddd" /><path d="M8 9l-4 5M10 9v5M12 9l5 5" stroke="#ddd" /></Ico></PanelTab>
            <PanelTab aria-label="运动"><Ico s={20}><circle cx="12" cy="10" r="7" stroke="#ddd" strokeWidth="1.500" /><circle cx="12" cy="10" r="3.500" stroke="#ddd" strokeWidth="1.500" /><circle cx="12" cy="10" r="1" fill="#fff" /><path d="M4 4c-3 4-3 8 0 12" stroke="#999" /></Ico></PanelTab>
            <PanelTab aria-label="显示"><Ico s={20}><path d="M0 2h20v13H0z" fill="#e8e8e8" /><path d="M7 6l3-2 4 2v5l-4 2-3-2z" stroke="#222" /><path d="M5 18h10" stroke="#ccc" strokeWidth="2" /></Ico></PanelTab>
            <PanelTab aria-label="实用程序"><Ico s={20}><path d="m3 16 8-9" stroke="#b88" strokeWidth="3" /><circle cx="12" cy="6" r="4" fill="#999" /></Ico></PanelTab>
          </PanelTabs>
          <PanelBody>
            <NameRow>
              <NameInput aria-label="对象名称" defaultValue="选择了 4 个 对象" />
              <Swatch aria-label="对象颜色" />
            </NameRow>
            <Picker label="修改器列表" value="修改器列表" $h={23} />
            <StackList />
            <StackTools>
              <StackButton aria-label="锁定堆栈"><Ico w={16} h={14}><path d="M0 7h6M6 3v8M7 5h5M7 9h5M12 2v10M15 2v10M12 2.500h3M12 11.500h3" stroke="#eee" /></Ico></StackButton>
              <ToolSeparator />
              <StackButton $on $w={34} aria-label="显示最终结果"><Ico w={12} h={14}><path d="M2 1l2 2v10M10 1L8 3v10" stroke="#eee" strokeWidth="1.500" /></Ico></StackButton>
              <ToolSeparator />
              <StackButton $w={28} aria-label="使唯一"><Ico w={16} h={14}><path d="m1 1 5 9M15 1l-5 9M4 2l4 7 4-7M6 9h4v4H6z" stroke="#eee" /></Ico></StackButton>
              <StackButton aria-label="移除修改器"><Ico w={14} h={16}><path d="M3 8h8v5l-2 2H5l-2-2zM2 7c2-4 8-4 10 0M7 8v3M8 4l3-3" stroke="#eee" strokeWidth="1.300" /></Ico></StackButton>
              <ToolSeparator />
              <StackButton $w={34} aria-label="配置修改器集"><Ico w={16} h={16}><path d="M1 1h12v12H1z" fill="#e8e8e8" /><path d="M1 1h12v3H1z" fill="#1515a8" /><path d="M3 7h3M3 10h3" stroke="#222" /><path d="M7 7h9v8H7z" fill="#444" /><path d="M8 9h8M8 13h8M10 7v8M14 7v8" stroke="#eee" strokeWidth="1.500" /></Ico></StackButton>
            </StackTools>
          </PanelBody>
          <Rollout />
          <PanelHandle aria-label="折叠面板">‹</PanelHandle>
        </Command>
      </Work>

      <Status>
        <Listener>
          <ListenerLine $pink aria-label="宏录制器" readOnly />
          <ListenerLine aria-label="侦听器" readOnly value="--  运行时错误:" />
        </Listener>
        <StatusLines>
          <StatusLine>
            <StatusText>选择了 4 个 对象</StatusText>
            <StatusButton $on aria-label="灯"><Ico w={16} h={18}><circle cx="8" cy="6" r="4.500" fill="#e88080" stroke="#fff" /><path d="M7 10h2v7H7z" fill="#fff" /></Ico></StatusButton>
            <StatusButton $w={32} aria-label="选择锁定"><Ico w={12} h={16}><path d="M3 8V3.500h6V8" stroke="#ddd" strokeWidth="2" /><path d="M1 8h10v7H1z" fill="#eadfb8" /><path d="M5 10h2v3H5z" fill="#333" /></Ico></StatusButton>
            <StatusButton $w={24} aria-label="绝对模式"><Ico w={14} h={16}><path d="M0 1h14v14H0z" fill="#eee" /><circle cx="7" cy="8" r="4" stroke="#222" strokeWidth="1.500" /><path d="M7 1v4M7 11v4M0 8h3M11 8h3" stroke="#222" strokeWidth="1.500" /></Ico></StatusButton>
            <Coord><span>X:</span><input defaultValue="2.44mm" /></Coord>
            <Coord><span>Y:</span><input defaultValue="0.004mm" /></Coord>
            <Coord><span>Z:</span><input defaultValue="0.0mm" /></Coord>
            <StatusCell>栅格 = 10.0mm</StatusCell>
          </StatusLine>
          <StatusLine>
            <StatusText>单击并拖动以选择并移动对象</StatusText>
            <StatusButton $on aria-label="隔离切换"><Ico s={16}><path d="M2 5l3-3h9v9l-3 3H2z" fill="#fff" stroke="#123" /><path d="M5 5h7v7H5z" fill="#dce8f8" stroke="#345" /></Ico></StatusButton>
            <StatusCell>添加时间标记</StatusCell>
          </StatusLine>
        </StatusLines>
        <KeyArea>
          <KeyButton $tall aria-label="设置关键点按钮"><Ico w={26} h={14}><circle cx="5" cy="7" r="4" stroke="#080808" strokeWidth="2.500" /><path d="M9 7h16M19 7v5M23 7v5" stroke="#080808" strokeWidth="2.500" /></Ico></KeyButton>
          <KeyButton>自动关键点</KeyButton>
          <Picker label="关键点选择集" value="选定对象" />
          <KeyButton>设置关键点</KeyButton>
          <FilterRow>
            <Ico w={20} h={18}><path d="M2 15c4 0 3-12 6-12s2 10 5 10 2-8 5-9" stroke="#cc5560" strokeWidth="1.500" /><path d="M2 9c3 0 5-5 8-6" stroke="#8ab" /></Ico>
            <KeyButton>关键点过滤器...</KeyButton>
          </FilterRow>
        </KeyArea>
        <Playback>
          <PlaybackRow>
            <PlayButton label="转至开头" w={26} d="M2 3v10M4 8l7-5v10zM11 8l7-5v10z" />
            <PlayButton label="上一帧" w={25} d="M2 8l8-5v10zM12.500 3v10M15.500 3v10M18 3v10" />
            <PlayButton label="播放动画" w={22} d="M5 3v10l9-5z" />
            <PlayButton label="下一帧" w={25} d="M18 8l-8-5v10zM7.500 3v10M4.500 3v10M2 3v10" />
            <PlayButton label="转至结尾" w={26} d="M18 3v10M16 8L9 3v10zM9 8L2 3v10z" />
          </PlaybackRow>
          <PlaybackRow>
            <PlayButton label="关键点模式" w={26} d="M2 3v10M4 8l6-4v8zM18 3v10M16 8l-5-4v8z" />
            <FrameInput aria-label="当前帧" defaultValue="0" />
            <StatusButton $w={14} aria-label="微调"><Ico w={8} h={14}><path d="M4 1l3 4H1zM4 13l3-4H1z" fill="#ccc" /></Ico></StatusButton>
            <StatusButton $w={22} aria-label="时间配置"><Ico s={16}><rect x="1" y="1" width="11" height="12" fill="#dce8f4" stroke="#234a7c" /><path d="M3 3h5v5H3z" fill="#2c5a94" /><circle cx="11" cy="11" r="4" fill="#eee" stroke="#333" /><path d="M11 9v2h2" stroke="#333" /></Ico></StatusButton>
          </PlaybackRow>
        </Playback>
        <NavGrid>
          <StatusButton $w={24} aria-label="缩放"><Ico s={18}><circle cx="6" cy="7" r="4.500" fill="#ddd" /><path d="M9 10l6 6M13 4h5M15.500 1.500v5" stroke="#ddd" strokeWidth="1.500" /></Ico></StatusButton>
          <StatusButton $w={24} aria-label="缩放所有"><Ico s={18}><path d="M3 2h6v6H3zM11 2h6v6h-6zM3 10h6v6H3zM11 10h6v6h-6z" fill="#e4e4ec" /></Ico></StatusButton>
          <StatusButton $w={24} aria-label="最大化显示"><Ico s={18}><path d="M1 5V1h4M13 1h4v4M1 13v4h4" stroke="#eee" /><path d="M4 7l2-2h8v7l-2 2H4z" fill="#6fae54" stroke="#263" /><path d="M17 13v4h-4z" fill="#fff" /></Ico></StatusButton>
          <StatusButton $w={24} aria-label="所有视图最大化"><Ico s={18}><path d="M10 1h7v7h-7zM11 10h6v6h-6z" fill="#ddd" /><path d="M1 9h8v7H1zM4 3h5v5H4z" fill="#6fae54" /></Ico></StatusButton>
          <StatusButton $w={24} aria-label="缩放区域"><Ico s={18}><rect x="2.500" y="1.500" width="11" height="11" stroke="#eee" strokeDasharray="2 2" /><circle cx="14" cy="13" r="3" fill="#ddd" /></Ico></StatusButton>
          <StatusButton $w={24} aria-label="平移"><Ico s={18}><path d="M5 16C3 13 1 11 1 9l4 2V3l2 5V1l2 6 2-6v7l3-5-1 7 3-2-4 8z" fill="#f0f0f0" /><path d="M17 13v4h-4z" fill="#fff" /></Ico></StatusButton>
          <StatusButton $w={24} aria-label="环绕"><Ico s={18}><path d="M9 1v13M2 14c3 3 10 3 14-1M4 11c2-6 8-6 10 0" stroke="#ddd" strokeWidth="1.500" /><path d="M6 9h6v5H6z" fill="#6fae54" /></Ico></StatusButton>
          <StatusButton $w={24} aria-label="最大化视口"><Ico s={18}><path d="M1 1h13v13H1z" fill="#dfe5ee" /><path d="M11 11L4 4M4 9V4h5" stroke="#222" strokeWidth="1.500" /><path d="M6 17h11V6" stroke="#ddd" /></Ico></StatusButton>
        </NavGrid>
      </Status>

      {marks.map(([x, y]) => (
        <Mark key={x + y} $x={x} $y={y}><b>零度网官方网址</b>WWW.ZEROCGN.COM</Mark>
      ))}
      <Brand>
        <BrandName><em>Z</em><span>ero</span>零度网</BrandName>
        <BrandMotto>一个祝您实现梦想的网站</BrandMotto>
        <BrandUrl>WWW.ZEROCGN.COM</BrandUrl>
      </Brand>
      <Subtitle>
        这个是我们制作的螺丝钉，因为场景很简单，需要更丰富的细节
        <br />
        这些小东西是很好的体现。
      </Subtitle>
      <Promo>
        <PromoSite><b>零度网官方网址:</b>WWW.ZEROCGN.COM</PromoSite>
        <PromoLine><b>作为原创</b><b>只为您能学的更好</b><b>超简单的方法让您事半功倍</b><b>操作软件游刃有余</b></PromoLine>
      </Promo>
      <Corner><CornerRibbon /></Corner>
      <Seal><SealDrawing /></Seal>
    </Page>
  );
}
